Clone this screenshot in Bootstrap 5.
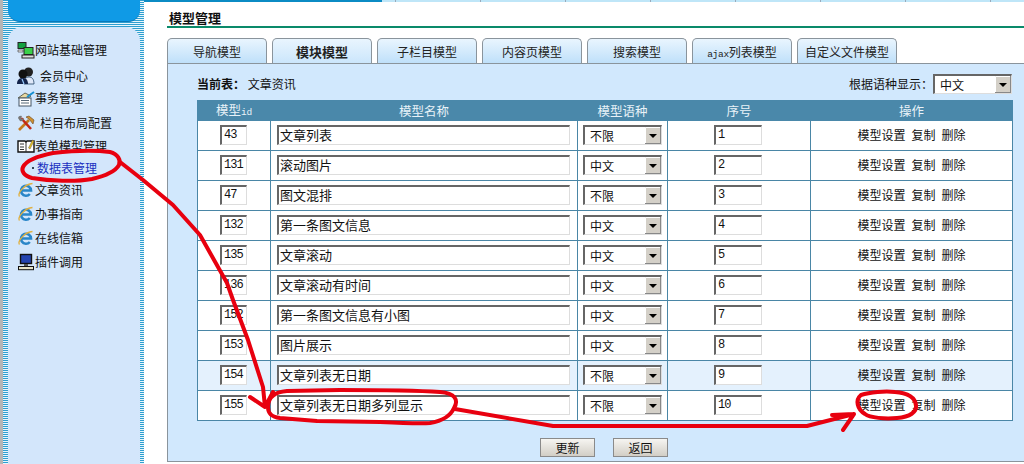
<!doctype html>
<html lang="zh">
<head>
<meta charset="utf-8">
<title>模型管理</title>
<link rel="stylesheet" href="https://cdn.jsdelivr.net/npm/bootstrap@5.3.0/dist/css/bootstrap.min.css">
<style>
html,body{height:464px;overflow:hidden;background:#fff}
body{font:12px/1.2 "Noto Sans CJK SC","Liberation Sans",sans-serif;color:#111;position:relative}
.shell{height:464px}
.side{width:144px;flex:none;border-left:3px solid #b5b5b5;padding:0 4px 0 5px;
 background:repeating-linear-gradient(180deg,#2f9fd0 0 1px,#e8f6fc 1px 2px)}
.sidetop{height:22px;background:#0f9ae6;border-radius:0 0 12px 12px;border-bottom:1px solid #0a78b8;margin-bottom:5px}
.sidepanel{height:437px;background:#d3e6fb;border-radius:14px 14px 0 0;padding-top:13px}
.mitem{display:flex;align-items:center;height:20px;padding-left:9px;white-space:nowrap}
.mitem svg{flex:none}
.sub{color:#1a2fc0;padding-left:24px;gap:3px}
.sub::before{content:"";width:2px;height:2px;background:#345}
.g2{margin-top:2px}.g3{margin-top:3px}.g4{margin-top:4px}.g5{margin-top:5px}.g6{margin-top:6px}
.ind{gap:5px}
.main{flex:1;padding-left:23px;min-width:0}
.topstrip{height:2px;margin-left:-23px;background:linear-gradient(90deg,#0b8bc4 0 238px,transparent 238px),repeating-linear-gradient(90deg,#bfe6f8 0 84px,#9ab 84px 85px);background-position:0 0,-3px 0}
.pgtitle{height:17px;margin-bottom:10px;border-bottom:2px solid #0a8a6a;font-weight:700;font-size:13px;line-height:17px;padding:7px 0 0 2px;box-sizing:content-box}
.tabbar{gap:5px;height:25px}
.tabx{width:100px;height:25px;border:1px solid #8a949c;border-bottom:0;border-radius:5px 5px 0 0;text-align:center;line-height:25px;color:#222;background:linear-gradient(180deg,#e9f5fe,#bfe0fa)}
.tabx.on{background:linear-gradient(180deg,#e9f5fe,#cbe6fc);font-weight:700;font-size:13px}
.latin{font-family:"Liberation Mono",monospace;font-size:9.5px;letter-spacing:-.3px}
.pane{height:399px;background:#d1e8fd;border:1px solid #8a949c;border-right:0;padding:10px 12px 0 29px}
.curbar{height:26px;line-height:20px}
.curbar b{font-weight:700}
.mtable{width:815px;margin:0;table-layout:fixed;border-collapse:collapse;background:#fff;border:1px solid #4a86a6;--bs-table-bg:transparent}
.mtable th,.mtable td{padding:0;border:1px solid #4a86a6;text-align:center;vertical-align:middle;height:30px;font-weight:400;color:#111}
.mtable th{height:20px;background:#4a88aa;color:#e8f2f8;border-color:#4a88aa;font-size:12.5px}
.mtable tr.hl td{background:#e4f1fd}
.tinput{display:block;height:20px;border:1px solid #ddd;border-top:2px solid #666;border-left:2px solid #666;border-radius:0;padding:0 0 2px 1px;background:#fff;font-size:13px;color:#111;line-height:16px;outline:0;box-shadow:none;margin-bottom:1px}
.mono{font-family:"Liberation Mono",monospace;font-size:12px;letter-spacing:-1px;padding-left:2px}
.wid{width:27px;margin-left:22px}
.wname{width:293px;margin-left:6px}
.word{width:48px;margin-left:46px}
.tsel{width:79px;height:20px;margin:0 0 1px 5px;padding:0 0 0 5px;border:1px solid #ddd;border-top:2px solid #666;border-left:2px solid #666;border-radius:0;font-size:12px;color:#111;line-height:16px;box-shadow:none;
 background-color:#fff;background-repeat:no-repeat;background-position:right 0 top 0;background-size:16px 17px;
 background-image:url("data:image/svg+xml,%3Csvg xmlns='http://www.w3.org/2000/svg' width='16' height='17'%3E%3Crect width='16' height='17' fill='%23d4d0c8'/%3E%3Cpath d='M0 16.5H16M15.5 0V17' stroke='%23888'/%3E%3Cpath d='M.5 16V.5H15' stroke='%23fff' fill='none'/%3E%3Cpath d='M4 7h8l-4 4z' fill='%23000'/%3E%3C/svg%3E")}
.tsel.lang{margin:0}
.ops{gap:6px;justify-content:center}
.ops a{color:#111;text-decoration:none}
.actions{gap:18px;padding-top:17px;margin-left:343px}
.xbtn{width:55px;height:19px;padding:0;border:1px solid #8a8a8a;border-radius:0;background:linear-gradient(180deg,#f6f5f1,#d2cec6);font-size:12px;line-height:17px;color:#111}
.scribble{position:absolute;left:0;top:0;width:1024px;height:464px;pointer-events:none}
.scribble path{fill:none;stroke:#e8000f;stroke-width:4;stroke-linecap:round;stroke-linejoin:round}
</style>
</head>
<body>
<svg width="0" height="0" class="position-absolute">
 <defs>
  <symbol id="ieico" viewBox="0 0 18 18"><path d="M4.5 9.5H14A5 5 0 1 0 12.8 13" fill="none" stroke="#2a86c8" stroke-width="2.6"/><path d="M2.5 15.5C0 12 8 3 15.5 2.5" fill="none" stroke="#e0b040" stroke-width="1.3"/></symbol>
 </defs>
</svg>
<div class="shell d-flex">
 <aside class="side">
  <div class="sidetop"></div>
  <nav class="sidepanel">
   <div class="mitem"><svg width="18" height="18" viewBox="0 0 18 18"><rect x="1" y="1.5" width="8" height="6" fill="#12a040" stroke="#222"/><rect x="7" y="6.5" width="9" height="7" fill="#3ad04a" stroke="#222"/><path d="M1 9h5v2H1z" fill="#eee" stroke="#333" stroke-width=".6"/><rect x="5" y="14" width="12" height="3" fill="#ddd" stroke="#222"/></svg>网站基础管理</div>
   <div class="mitem g6 ind"><svg width="18" height="18" viewBox="0 0 18 18"><circle cx="11.5" cy="5" r="4.5" fill="#222"/><path d="M7 17c0-5 2-7 5-7s5 2 5 7z" fill="#dfe8f8" stroke="#246" stroke-width=".8"/><circle cx="6" cy="7" r="4.5" fill="#111"/><path d="M0 17c0-5 3-6 6-6s5 2 5 6z" fill="#14244a"/><path d="M5 12l2 5" stroke="#9cf" stroke-width="1.2"/></svg>会员中心</div>
   <div class="mitem g2"><svg width="18" height="17" viewBox="0 0 18 17"><path d="M1 8l7-5 6 3-3 2z" fill="#e8d8a0" stroke="#665"/><rect x="2" y="8" width="12" height="8" fill="#fff" stroke="#456"/><path d="M4 10.5h8M4 13h8" stroke="#567"/><path d="M10 7l7-5" stroke="#1890d0" stroke-width="2"/></svg>事务管理</div>
   <div class="mitem g5 ind"><svg width="18" height="17" viewBox="0 0 18 17"><path d="M2 15L12 5" stroke="#c47a1e" stroke-width="2.6"/><path d="M9 2l3-1 5 4-1 4-4-5z" fill="#d09030" stroke="#642" stroke-width=".6"/><path d="M4 3l10 11" stroke="#c02818" stroke-width="2.6"/><path d="M1 3a3 3 0 0 1 4-2L4 3l1 1 2-1a3 3 0 0 1-4 3z" fill="#777"/></svg>栏目布局配置</div>
   <div class="mitem g3"><svg width="18" height="16" viewBox="0 0 18 16"><path d="M1 3h7l1 1 1-1h7v11H1z" fill="#fff" stroke="#111" stroke-width="1.4"/><path d="M9 4v10M3 6h4M3 9h4M3 11.5h4" stroke="#333"/><path d="M11.5 10l4-8 1.5 1-4 8z" fill="#e8c820" stroke="#654" stroke-width=".5"/></svg>表单模型管理</div>
   <div class="mitem sub g2">数据表管理</div>
   <div class="mitem g2"><svg width="18" height="18"><use href="#ieico"/></svg>文章资讯</div>
   <div class="mitem g4"><svg width="18" height="18"><use href="#ieico"/></svg>办事指南</div>
   <div class="mitem g4"><svg width="18" height="18"><use href="#ieico"/></svg>在线信箱</div>
   <div class="mitem g4"><svg width="18" height="18" viewBox="0 0 18 18"><rect x="3.5" y="1.5" width="11" height="9" fill="#2444b0" stroke="#111" stroke-width="1.4"/><path d="M7 11v2h4v-2" fill="#555"/><rect x="1.5" y="13.5" width="15" height="3.2" fill="#e8e4c8" stroke="#111"/></svg>插件调用</div>
  </nav>
 </aside>
 <main class="main">
  <div class="topstrip"></div>
  <div class="pgtitle">模型管理</div>
  <div class="tabbar d-flex">
   <div class="tabx">导航模型</div><div class="tabx on">模块模型</div><div class="tabx">子栏目模型</div><div class="tabx">内容页模型</div><div class="tabx">搜索模型</div><div class="tabx"><span class="latin">ajax</span>列表模型</div><div class="tabx">自定义文件模型</div>
  </div>
  <div class="pane">
   <div class="curbar d-flex justify-content-between align-items-start">
    <div><b>当前表：</b> 文章资讯</div>
    <div class="d-flex align-items-start">根据语种显示：<select class="form-select tsel lang"><option>中文</option></select></div>
   </div>
   <table class="table mtable">
    <colgroup><col style="width:73px"><col style="width:307px"><col style="width:90px"><col style="width:143px"><col style="width:202px"></colgroup>
    <thead><tr><th>模型<span class="latin">id</span></th><th>模型名称</th><th>模型语种</th><th>序号</th><th>操作</th></tr></thead>
    <tbody>
     <tr><td><input class="tinput wid mono" value="43"></td><td><input class="tinput wname" value="文章列表"></td><td><select class="form-select tsel"><option>不限</option></select></td><td><input class="tinput word mono" value="1"></td><td><div class="d-flex ops"><a href="#">模型设置</a><a href="#">复制</a><a href="#">删除</a></div></td></tr>
     <tr><td><input class="tinput wid mono" value="131"></td><td><input class="tinput wname" value="滚动图片"></td><td><select class="form-select tsel"><option>中文</option></select></td><td><input class="tinput word mono" value="2"></td><td><div class="d-flex ops"><a href="#">模型设置</a><a href="#">复制</a><a href="#">删除</a></div></td></tr>
     <tr><td><input class="tinput wid mono" value="47"></td><td><input class="tinput wname" value="图文混排"></td><td><select class="form-select tsel"><option>不限</option></select></td><td><input class="tinput word mono" value="3"></td><td><div class="d-flex ops"><a href="#">模型设置</a><a href="#">复制</a><a href="#">删除</a></div></td></tr>
     <tr><td><input class="tinput wid mono" value="132"></td><td><input class="tinput wname" value="第一条图文信息"></td><td><select class="form-select tsel"><option>中文</option></select></td><td><input class="tinput word mono" value="4"></td><td><div class="d-flex ops"><a href="#">模型设置</a><a href="#">复制</a><a href="#">删除</a></div></td></tr>
     <tr><td><input class="tinput wid mono" value="135"></td><td><input class="tinput wname" value="文章滚动"></td><td><select class="form-select tsel"><option>中文</option></select></td><td><input class="tinput word mono" value="5"></td><td><div class="d-flex ops"><a href="#">模型设置</a><a href="#">复制</a><a href="#">删除</a></div></td></tr>
     <tr><td><input class="tinput wid mono" value="136"></td><td><input class="tinput wname" value="文章滚动有时间"></td><td><select class="form-select tsel"><option>中文</option></select></td><td><input class="tinput word mono" value="6"></td><td><div class="d-flex ops"><a href="#">模型设置</a><a href="#">复制</a><a href="#">删除</a></div></td></tr>
     <tr><td><input class="tinput wid mono" value="152"></td><td><input class="tinput wname" value="第一条图文信息有小图"></td><td><select class="form-select tsel"><option>中文</option></select></td><td><input class="tinput word mono" value="7"></td><td><div class="d-flex ops"><a href="#">模型设置</a><a href="#">复制</a><a href="#">删除</a></div></td></tr>
     <tr><td><input class="tinput wid mono" value="153"></td><td><input class="tinput wname" value="图片展示"></td><td><select class="form-select tsel"><option>中文</option></select></td><td><input class="tinput word mono" value="8"></td><td><div class="d-flex ops"><a href="#">模型设置</a><a href="#">复制</a><a href="#">删除</a></div></td></tr>
     <tr class="hl"><td><input class="tinput wid mono" value="154"></td><td><input class="tinput wname" value="文章列表无日期"></td><td><select class="form-select tsel"><option>不限</option></select></td><td><input class="tinput word mono" value="9"></td><td><div class="d-flex ops"><a href="#">模型设置</a><a href="#">复制</a><a href="#">删除</a></div></td></tr>
     <tr><td><input class="tinput wid mono" value="155"></td><td><input class="tinput wname" value="文章列表无日期多列显示"></td><td><select class="form-select tsel"><option>不限</option></select></td><td><input class="tinput word mono" value="10"></td><td><div class="d-flex ops"><a href="#">模型设置</a><a href="#">复制</a><a href="#">删除</a></div></td></tr>
    </tbody>
   </table>
   <div class="actions d-flex"><button class="btn xbtn">更新</button><button class="btn xbtn">返回</button></div>
  </div>
 </main>
</div>
<svg class="scribble" viewBox="0 0 1024 464">
 <path d="M53 153C70 151 95 150 110 152C118 154 121 160 119 165C115 172 105 176 92 179C75 182 50 181 32 178C24 176 21 171 23 167C26 161 38 156 53 153"/>
 <path d="M120 162L143 180L173 205L200 235L227 283L233 300L248 340L263 387L265 407M250 397L265 407L273 392"/>
 <path d="M287 391C274 392 268 398 268 407C268 414 272 417 280 418L317 421L380 422C400 423 420 424 430 423C442 421 450 417 454 408C459 400 455 393 440 392C410 390 370 390 340 390L287 391"/>
 <path d="M455 409L553 426L684 426L807 426L854 414M832 415L854 414L843 430"/>
 <path d="M861 395C870 392 885 391 895 392C908 393 915 398 916 405C917 412 910 417 897 418C885 419 870 418 865 414C857 409 855 400 861 395"/>
</svg>
<script src="https://cdn.jsdelivr.net/npm/bootstrap@5.3.0/dist/js/bootstrap.bundle.min.js"></script>
</body>
</html>
